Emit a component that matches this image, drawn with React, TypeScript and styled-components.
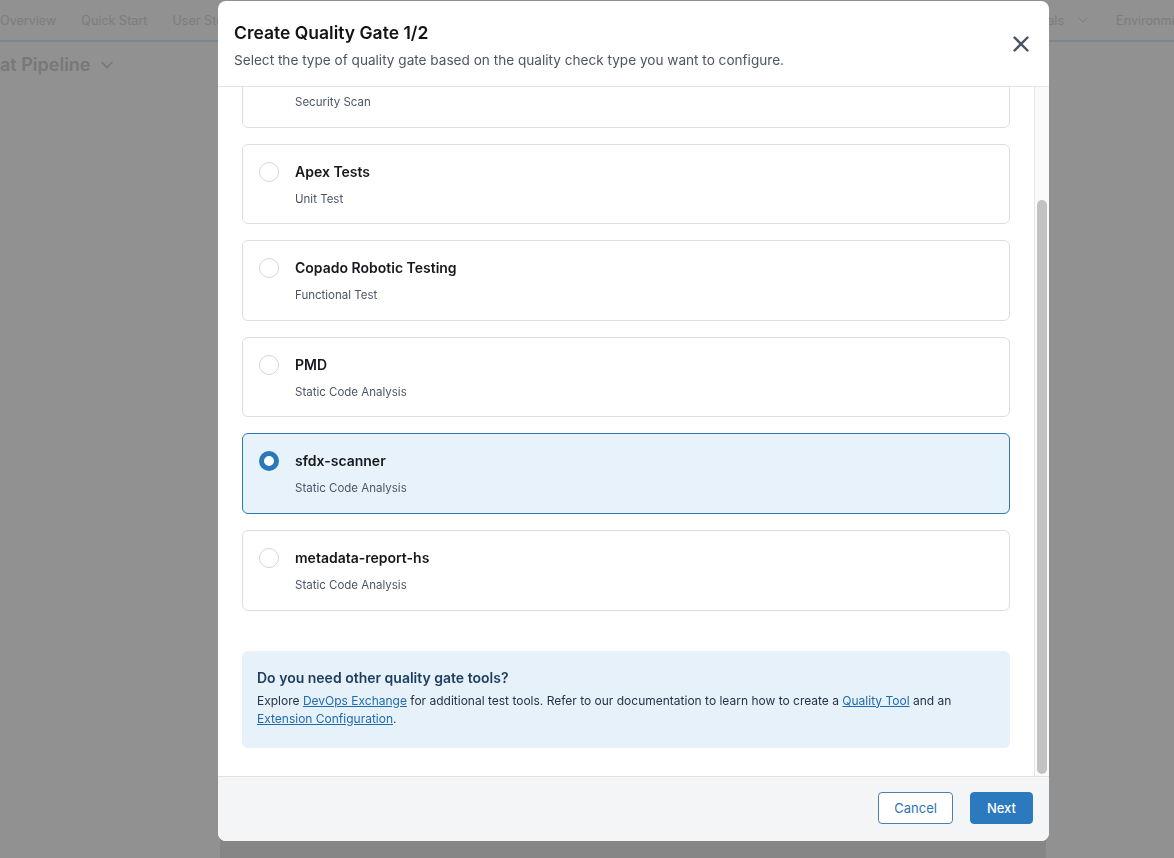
import React, { useLayoutEffect, useRef } from "react";
import styled, { createGlobalStyle, css } from "styled-components";
import { X, ChevronDown } from "lucide-react";

const GlobalStyle = createGlobalStyle`
  html, body {
    margin: 0;
    padding: 0;
    overflow: hidden;
    background: #ffffff;
  }
  body {
    font-family: Inter, "Noto Sans", "Liberation Sans", sans-serif;
    -webkit-font-smoothing: antialiased;
  }
  * {
    box-sizing: border-box;
  }
`;

/* page behind the modal */

const PageStyle = styled.div`
  width: 1174px;
  height: 858px;
  display: flex;
  flex-direction: column;
  background-color: #ffffff;
  overflow: hidden;
`;

const TabBarStyle = styled.nav`
  height: 42px;
  display: flex;
  align-items: center;
  border-bottom: 2px solid #d0f0ff;
`;

const TabGroupStyle = styled.div<{ $end?: boolean }>`
  display: flex;
  align-items: center;
  gap: 25px;
  margin-left: ${(p) => (p.$end ? "auto" : "0")};
  margin-right: ${(p) => (p.$end ? "-23px" : "0")};
`;

const TabStyle = styled.span`
  font-size: 12.6px;
  color: #dcdcdc;
  display: flex;
  align-items: center;
  gap: 11px;
  white-space: nowrap;
`;

const PageTitleStyle = styled.h1`
  margin: 12px 0 0;
  font-size: 18px;
  font-weight: 600;
  color: #d4d4d4;
  display: flex;
  align-items: center;
  gap: 6px;
`;

const PagePanelStyle = styled.div`
  margin: auto 128px 0 220px;
  height: 60px;
  background-color: #ececec;
  border-radius: 8px 8px 0 0;
`;

/* overlay + modal */

const BackdropStyle = styled.div`
  position: fixed;
  inset: 0;
  background-color: rgba(0, 0, 0, 0.43);
`;

const ModalStyle = styled.div`
  position: fixed;
  left: 218px;
  top: 1px;
  width: 831px;
  height: 840px;
  display: flex;
  flex-direction: column;
  background-color: #ffffff;
  border-radius: 8px;
  overflow: hidden;
`;

const HeaderStyle = styled.header`
  height: 86px;
  flex-shrink: 0;
  display: flex;
  align-items: flex-start;
  justify-content: space-between;
  padding: 20px 15px 0 16px;
  border-bottom: 1px solid #e3e5e8;
`;

const TitleStyle = styled.h2`
  margin: 0;
  font-size: 17.5px;
  line-height: 24px;
  font-weight: 600;
  color: #121317;
`;

const SubtitleStyle = styled.p`
  margin: 5px 0 0;
  font-size: 13.6px;
  line-height: 20px;
  color: #4d5565;
`;

const CloseButtonStyle = styled.button`
  border: none;
  background: none;
  padding: 0;
  margin-top: 10px;
  color: #4a5263;
  display: flex;
  cursor: pointer;
`;

const BodyRowStyle = styled.div`
  flex: 1;
  min-height: 0;
  display: flex;
`;

const ScrollAreaStyle = styled.div`
  flex: 1;
  overflow: hidden;
  padding: 93px 24px 28px;
  display: flex;
  flex-direction: column;
`;

const ScrollTrackStyle = styled.div`
  width: 15px;
  flex-shrink: 0;
  display: flex;
  flex-direction: column;
  padding: 113px 2px 2px 2px;
  background-color: #fafafa;
  border-left: 1px solid #e6e6e6;
`;

const ScrollThumbStyle = styled.div`
  flex: 1;
  border-radius: 5px;
  background-color: #c2c2c2;
`;

const OptionListStyle = styled.div`
  display: flex;
  flex-direction: column;
  gap: 16px;
`;

const OptionCardStyle = styled.label<{ $selected?: boolean }>`
  height: 80.6px;
  display: flex;
  align-items: flex-start;
  gap: 16px;
  padding: 17px 16px 16px;
  border: 1px solid #dcdee2;
  border-radius: 6px;
  background-color: #ffffff;
  cursor: pointer;

  ${(p) =>
    p.$selected &&
    css`
      border-color: #2f78b7;
      background-color: #e8f2fa;
    `}
`;

const RadioStyle = styled.span<{ $checked?: boolean }>`
  width: 20px;
  height: 20px;
  flex-shrink: 0;
  border-radius: 50%;
  background-color: #ffffff;
  border: 1px solid #d3d6db;

  ${(p) =>
    p.$checked &&
    css`
      border: 5.5px solid #2a77b9;
    `}
`;

const OptionTextStyle = styled.div`
  display: flex;
  flex-direction: column;
  gap: 8px;
`;

const OptionNameStyle = styled.span`
  font-size: 14px;
  line-height: 20px;
  font-weight: 600;
  color: #16181d;
`;

const OptionTypeStyle = styled.span`
  font-size: 11.5px;
  line-height: 18px;
  color: #4d5565;
`;

const InfoBoxStyle = styled.div`
  margin-top: 40px;
  height: 97px;
  flex-shrink: 0;
  padding: 17px 15px 0;
  background-color: #e7f1f9;
  border-radius: 6px;
`;

const InfoTitleStyle = styled.h3`
  margin: 0;
  font-size: 14px;
  line-height: 20px;
  font-weight: 600;
  color: #1c3d5e;
`;

const InfoTextStyle = styled.p`
  margin: 4px 0 0;
  font-size: 12px;
  line-height: 18px;
  color: #233447;

  & > a {
    color: #1f6bb0;
    text-decoration: underline;
  }
`;

const FooterStyle = styled.footer`
  height: 65px;
  flex-shrink: 0;
  display: flex;
  align-items: center;
  justify-content: flex-end;
  gap: 17px;
  padding: 0 16px 2px;
  background-color: #f4f5f7;
  border-top: 1px solid #dfe1e5;
`;

const ButtonStyle = styled.button<{ $primary?: boolean }>`
  height: 32px;
  padding: 0 15px;
  border-radius: 4px;
  font-family: inherit;
  font-size: 13px;
  cursor: pointer;
  border: 1px solid #4f7ea8;
  background-color: #ffffff;
  color: #2b74b3;

  ${(p) =>
    p.$primary &&
    css`
      padding: 0 16px;
      border-color: #2a7abd;
      background-color: #2a7abd;
      color: #ffffff;
      font-weight: 500;
    `}
`;

const options = [
  { name: "Checkmarx", type: "Security Scan" },
  { name: "Apex Tests", type: "Unit Test" },
  { name: "Copado Robotic Testing", type: "Functional Test" },
  { name: "PMD", type: "Static Code Analysis" },
  { name: "sfdx-scanner", type: "Static Code Analysis", selected: true },
  { name: "metadata-report-hs", type: "Static Code Analysis" },
];

const App = () => {
  const bodyRef = useRef<HTMLDivElement>(null);

  // the list is shown scrolled to its end
  useLayoutEffect(() => {
    if (bodyRef.current) {
      bodyRef.current.scrollTop = bodyRef.current.scrollHeight;
    }
  }, []);

  return (
    <>
      <GlobalStyle />
      <PageStyle>
        <TabBarStyle>
          <TabGroupStyle>
            <TabStyle>Overview</TabStyle>
            <TabStyle>Quick Start</TabStyle>
            <TabStyle>User Stories</TabStyle>
          </TabGroupStyle>
          <TabGroupStyle $end>
            <TabStyle>
              Approvals <ChevronDown size={16} strokeWidth={1.5} />
            </TabStyle>
            <TabStyle>Environments</TabStyle>
          </TabGroupStyle>
        </TabBarStyle>
        <PageTitleStyle>
          at Pipeline <ChevronDown size={20} strokeWidth={2} />
        </PageTitleStyle>
        <PagePanelStyle />
      </PageStyle>

      <BackdropStyle />

      <ModalStyle role="dialog">
        <HeaderStyle>
          <div>
            <TitleStyle>Create Quality Gate 1/2</TitleStyle>
            <SubtitleStyle>
              Select the type of quality gate based on the quality check type
              you want to configure.
            </SubtitleStyle>
          </div>
          <CloseButtonStyle aria-label="Close">
            <X size={26} strokeWidth={2.2} />
          </CloseButtonStyle>
        </HeaderStyle>

        <BodyRowStyle>
          <ScrollAreaStyle ref={bodyRef}>
            <OptionListStyle>
              {options.map((o) => (
                <OptionCardStyle key={o.name} $selected={o.selected}>
                  <RadioStyle $checked={o.selected} />
                  <OptionTextStyle>
                    <OptionNameStyle>{o.name}</OptionNameStyle>
                    <OptionTypeStyle>{o.type}</OptionTypeStyle>
                  </OptionTextStyle>
                </OptionCardStyle>
              ))}
            </OptionListStyle>

            <InfoBoxStyle>
              <InfoTitleStyle>Do you need other quality gate tools?</InfoTitleStyle>
              <InfoTextStyle>
                Explore <a href="#">DevOps Exchange</a> for additional test
                tools. Refer to our documentation to learn how to create a{" "}
                <a href="#">Quality Tool</a> and an
                <br />
                <a href="#">Extension Configuration</a>.
              </InfoTextStyle>
            </InfoBoxStyle>
          </ScrollAreaStyle>
          <ScrollTrackStyle>
            <ScrollThumbStyle />
          </ScrollTrackStyle>
        </BodyRowStyle>

        <FooterStyle>
          <ButtonStyle>Cancel</ButtonStyle>
          <ButtonStyle $primary>Next</ButtonStyle>
        </FooterStyle>
      </ModalStyle>
    </>
  );
};

export default App;
